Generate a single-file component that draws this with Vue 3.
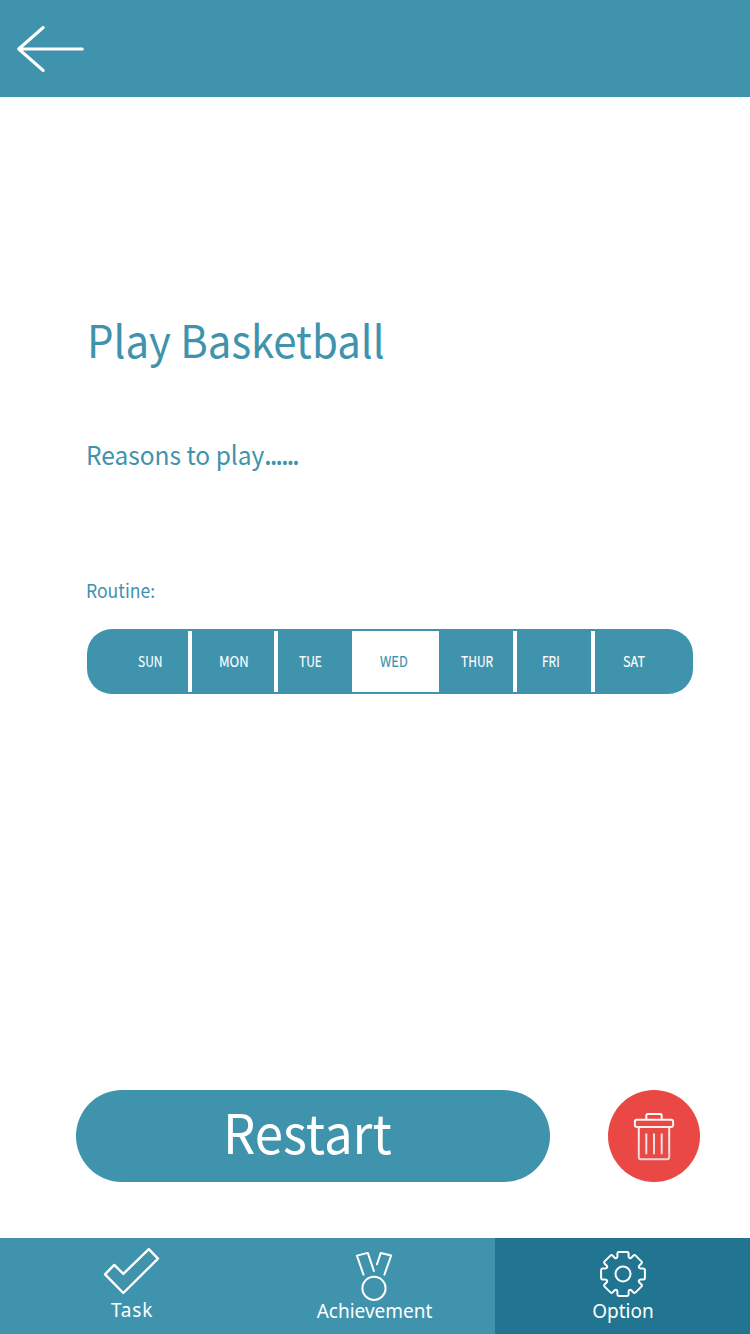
<script setup>
const days = ['SUN', 'MON', 'TUE', 'WED', 'THUR', 'FRI', 'SAT']
const active = 'WED'

// One gear tooth, repeated eight times around the centre.
const tooth = [[-5.6, -17.3], [-5.6, -20.5], [-5.6, -21.9], [-4.1, -21.9], [4.1, -21.9], [5.6, -21.9], [5.6, -20.5], [5.6, -17.3], [6.2, -15]]
function turn([x, y], k) {
  const a = (k * Math.PI) / 4
  return `${(x * Math.cos(a) - y * Math.sin(a)).toFixed(2)} ${(x * Math.sin(a) + y * Math.cos(a)).toFixed(2)}`
}
let gear = ''
for (let k = 0; k < 8; k++) {
  const p = tooth.map((t) => turn(t, k))
  gear += `${k ? '' : 'M' + p[0]}L${p[1]}Q${p[2]} ${p[3]}L${p[4]}Q${p[5]} ${p[6]}L${p[7]}Q${p[8]} ${turn(tooth[0], k + 1)}`
}
gear += 'Z'
</script>

<template>
  <div class="screen">
    <header class="top">
      <svg class="back" width="70" height="50" viewBox="0 0 70 50">
        <path d="M27.2 3.5L2.7 25L27.2 46.5M2.7 25H66.3" />
      </svg>
    </header>

    <main class="content">
      <h1 class="title"><span>Play Basketball</span></h1>
      <p class="reason"><span>Reasons to play<i>......</i></span></p>
      <p class="routine"><span>Routine:</span></p>
      <div class="week">
        <div v-for="d in days" :key="d" class="day" :class="[d.toLowerCase(), { active: d === active }]">
          <span>{{ d }}</span>
        </div>
      </div>
    </main>

    <div class="actions">
      <button class="restart"><span>Restart</span></button>
      <button class="delete">
        <svg width="46" height="52" viewBox="0 0 46 52">
          <defs>
            <linearGradient id="metal" gradientUnits="userSpaceOnUse" x1="0" y1="3" x2="0" y2="50">
              <stop offset="0" stop-color="#fff" />
              <stop offset=".3" stop-color="#fbeeee" />
              <stop offset="1" stop-color="#e2d6d6" />
            </linearGradient>
          </defs>
          <g fill="none" stroke="url(#metal)" stroke-width="2">
            <path d="M15.3 9.5V5.5Q15.3 4 16.8 4H29.2Q30.7 4 30.7 5.5V9.5" />
            <rect x="3.9" y="9.8" width="38.2" height="7.2" rx="2" />
            <path d="M7.8 17V47Q7.8 49.2 10 49.2H36Q38.2 49.2 38.2 47V17" />
            <path d="M15.3 23.5V44.3M23.001 23.5V44.3M30.7 23.5V44.3" />
          </g>
        </svg>
      </button>
    </div>

    <nav class="tabs">
      <a class="tab task">
        <svg width="60" height="50" viewBox="0 0 60 50">
          <path d="M3 27.3L12.3 17.9L21.3 26.9L46.8 2.2L56 11.6L21.3 46Z" />
        </svg>
        <span>Task</span>
      </a>
      <a class="tab achievement">
        <svg width="50" height="54" viewBox="0 0 50 54">
          <circle cx="25" cy="39.3" r="11.6" />
          <path d="M14.5 25.6L7.9 6.6L18.8 3.9L24.9 22M28 15.3L31.7 4L42.2 6.5L35.4 25.6" />
        </svg>
        <span>Achievement</span>
      </a>
      <a class="tab option">
        <svg width="50" height="50" viewBox="-25 -25 50 50">
          <path :d="gear" />
          <circle r="7.5" />
        </svg>
        <span>Option</span>
      </a>
    </nav>
  </div>
</template>

<style scoped>
.screen {
  width: 750px;
  height: 1334px;
  display: flex;
  flex-direction: column;
  background: #fff;
  color: #4093ad;
  font-family: "Noto Sans CJK SC", "Noto Sans", sans-serif;
}
span {
  display: inline-block;
  transform-origin: 0 50%;
  white-space: nowrap;
}
.top {
  height: 97px;
  background: #4093ad;
  box-sizing: border-box;
  padding: 24px 16px;
}
.back {
  display: block;
}
.back path {
  fill: none;
  stroke: #fff;
  stroke-width: 3;
  stroke-linecap: round;
  stroke-linejoin: round;
}
.content {
  flex: 1;
  padding: 212px 57px 0 87px;
}
.title {
  margin: 0;
  font-size: 44.5px;
  line-height: 60px;
  font-weight: 400;
  margin-left: -0.5px;
}
.title span {
  transform: scaleX(0.942);
}
.reason {
  margin: 67px 0 0 -1.5px;
  font-size: 26px;
  line-height: 36px;
}
.reason span {
  transform: scaleX(0.942);
}
.reason i {
  font-style: normal;
  font-weight: 500;
  letter-spacing: -1.8px;
}
.routine {
  margin: 106px 0 0 -1px;
  font-size: 19px;
  line-height: 24px;
}
.routine span {
  transform: scaleX(0.925);
}
.week {
  margin-top: 27px;
  height: 65px;
  box-sizing: border-box;
  padding: 2px 0;
  border-radius: 25px;
  background: #4093ad;
  display: grid;
  grid-template-columns: 105px 86px 74px 87px 78px 78px 98px;
}
.day {
  box-sizing: border-box;
  border-right: 4px solid #fff;
  color: #fff;
  font-size: 15px;
  line-height: 60px;
  height: 61px;
}
.day span {
  transform: scaleX(0.8);
  -webkit-text-stroke: 0.15px currentColor;
}
.sun { padding-left: 50.5px; }
.mon { padding-left: 26.5px; }
.mon span { transform: scaleX(0.87); }
.tue { padding-left: 21px; border: 0; }
.wed { padding-left: 28px; border: 0; }
.wed span { transform: scaleX(0.86); }
.thur { padding-left: 22px; }
.fri { padding-left: 25px; }
.sat { padding-left: 28px; border: 0; }
.sat span { transform: scaleX(0.84); }
.active {
  background: #fff;
  color: #4093ad;
}
.actions {
  display: flex;
  gap: 58px;
  padding: 0 50px 56px 76px;
}
button {
  border: 0;
  padding: 0;
  color: #fff;
  font-family: inherit;
}
.restart {
  width: 474px;
  height: 92px;
  border-radius: 46px;
  background: #4093ad;
  text-align: left;
  padding-left: 146.5px;
  font-size: 54px;
  line-height: 80px;
  padding-bottom: 10px;
}
.restart span {
  transform: scaleX(0.945);
}
.delete {
  width: 92px;
  height: 92px;
  border-radius: 50%;
  background: #e94844;
  display: flex;
  justify-content: center;
  align-items: center;
}
.tabs {
  height: 96px;
  display: grid;
  grid-template-columns: 247px 248px 255px;
  background: #4093ad;
  color: #fff;
  font-family: "Noto Sans", sans-serif;
  font-size: 19px;
}
.tab {
  display: flex;
  flex-direction: column;
  align-items: center;
  line-height: 24px;
}
.tab svg {
  fill: none;
  stroke: #fff;
  stroke-width: 2;
  stroke-linejoin: round;
  stroke-linecap: round;
}
.task {
  padding: 9px 0 0 16px;
}
.tab.task svg {
  stroke-width: 2.4;
}
.task span {
  margin-top: 1px;
  padding-left: 1px;
  letter-spacing: 0.8px;
}
.achievement {
  padding: 11px 0 0 6px;
}
.achievement span {
  margin-top: -4px;
  padding-left: 1px;
}
.option {
  background: #217590;
  padding-top: 11px;
}
.option span {
  padding-left: 1px;
}
</style>
